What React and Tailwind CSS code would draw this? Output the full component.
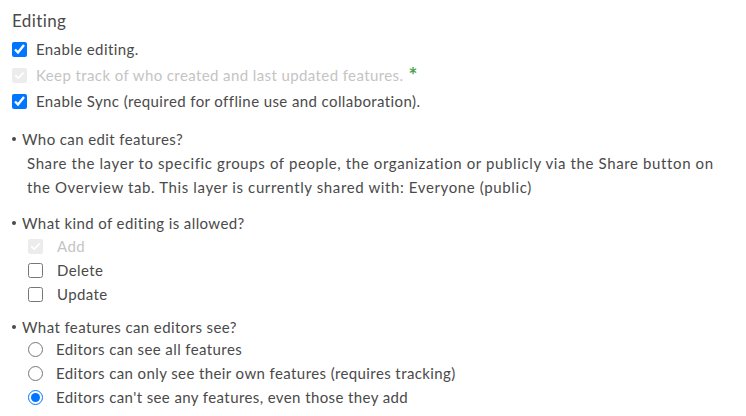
import React from 'react';

// rows of the editing settings panel
function DisabledBox() {
    return (
        <span className="w-[15px] h-[15px] rounded-[2px] bg-[#ececec] flex items-center justify-center">
            <svg width="11" height="11" viewBox="0 0 12 12" fill="none">
                <path d="M2 6.3l2.6 2.6L10 3.4" stroke="#fff" strokeWidth="2" strokeLinecap="round" strokeLinejoin="round" />
            </svg>
        </span>
    );
}

function Check({ label, checked, disabled, extra }) {
    return (
        <label className="flex items-center h-[26px] gap-[9px]">
            {disabled ? (
                <DisabledBox />
            ) : (
                <input
                    type="checkbox"
                    defaultChecked={checked}
                    className="w-[15px] h-[15px] m-0 accent-[#0075ff]"
                />
            )}
            <span className={disabled ? 'text-[#c4c4c4]' : ''}>{label}</span>
            {extra}
        </label>
    );
}

function SubCheck({ label, checked, disabled }) {
    return (
        <label className="flex items-center h-6 gap-[14px] pl-4">
            {disabled ? (
                <DisabledBox />
            ) : (
                <input
                    type="checkbox"
                    defaultChecked={checked}
                    className="w-[15px] h-[15px] m-0 accent-[#0075ff]"
                />
            )}
            <span className={disabled ? 'text-[#c4c4c4]' : ''}>{label}</span>
        </label>
    );
}

function Radio({ label, checked }) {
    return (
        <label className="flex items-center h-6 gap-[13px] pl-4">
            <input
                type="radio"
                name="visibility"
                defaultChecked={checked}
                className="w-[15px] h-[15px] m-0 accent-[#0075ff]"
            />
            <span>{label}</span>
        </label>
    );
}

function Bullet({ children }) {
    return (
        <div className="flex items-center h-6 gap-[6px]">
            <span className="w-[4px] h-[4px] rounded-full bg-[#4a4a4a]" />
            <span>{children}</span>
        </div>
    );
}

export default function App() {
    return (
        <div className="w-[746px] h-[416px] bg-white pl-3 pt-[9px] text-[15px] tracking-[0.4px] text-[#4a4a4a] font-['Lato',sans-serif] overflow-hidden">
            <h2 className="text-[17px] leading-6 h-6">Editing</h2>

            <div className="mt-[3px]">
                <Check label="Enable editing." checked />
                <Check
                    label="Keep track of who created and last updated features."
                    checked
                    disabled
                    extra={<span className="text-[#4aa352] text-[21px] font-bold leading-none -ml-[4px] -mt-[2px]">*</span>}
                />
                <Check label="Enable Sync (required for offline use and collaboration)." checked />
            </div>

            <div className="mt-[13px]">
                <Bullet>Who can edit features?</Bullet>
                <p className="pl-[15px] leading-6 w-[725px] tracking-[0.62px]">
                    Share the layer to specific groups of people, the organization or publicly via the Share button on the Overview tab. This layer is currently shared with: Everyone (public)
                </p>
            </div>

            <div className="mt-3">
                <Bullet>What kind of editing is allowed?</Bullet>
                <div className="-mt-px">
                    <SubCheck label="Add" checked disabled />
                    <SubCheck label="Delete" />
                    <SubCheck label="Update" />
                </div>
            </div>

            <div className="mt-[9px]">
                <Bullet>What features can editors see?</Bullet>
                <div className="-mt-[2px]">
                    <Radio label="Editors can see all features" />
                    <Radio label="Editors can only see their own features (requires tracking)" />
                    <Radio label="Editors can't see any features, even those they add" checked />
                </div>
            </div>
        </div>
    );
}
